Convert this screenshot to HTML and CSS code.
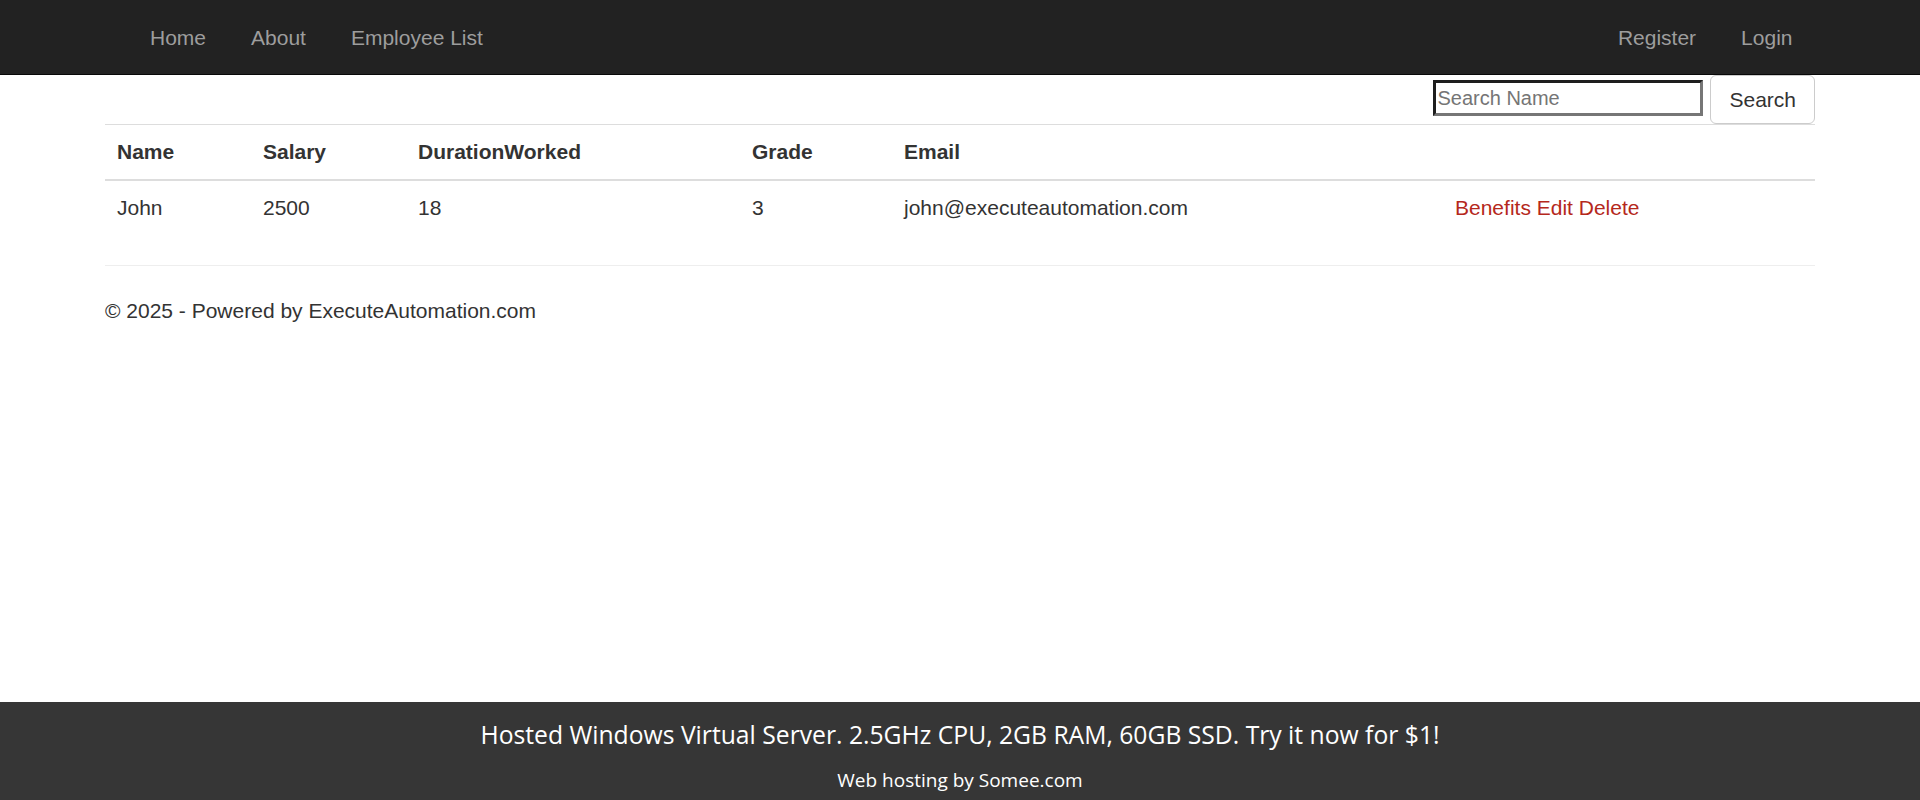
FILE: index.html
```html
<!DOCTYPE html>
<html lang="en">
<head>
<meta charset="utf-8">
<title>Employee List</title>
<link rel="stylesheet" href="styles.css">
</head>
<body>
<div class="page">
  <header class="navbar">
    <div class="nav-container">
      <ul class="nav nav-left">
        <li><a href="#">Home</a></li>
        <li><a href="#">About</a></li>
        <li><a href="#">Employee List</a></li>
      </ul>
      <ul class="nav nav-right">
        <li><a href="#">Register</a></li>
        <li><a href="#">Login</a></li>
      </ul>
    </div>
  </header>

  <main class="container">
    <form class="search-form">
      <input class="search-input" type="text" placeholder="Search Name">
      <button class="btn" type="button">Search</button>
    </form>

    <table class="table">
      <colgroup>
        <col class="c-name"><col class="c-salary"><col class="c-duration"><col class="c-grade"><col class="c-email"><col class="c-actions">
      </colgroup>
      <thead>
        <tr>
          <th>Name</th>
          <th>Salary</th>
          <th>DurationWorked</th>
          <th>Grade</th>
          <th>Email</th>
          <th></th>
        </tr>
      </thead>
      <tbody>
        <tr>
          <td>John</td>
          <td>2500</td>
          <td>18</td>
          <td>3</td>
          <td>john@executeautomation.com</td>
          <td><a class="act" href="#">Benefits</a> <a class="act" href="#">Edit</a> <a class="act" href="#">Delete</a></td>
        </tr>
      </tbody>
    </table>
    <hr class="sep">
    <footer class="site-footer">
      <p>&copy; 2025 - Powered by ExecuteAutomation.com</p>
    </footer>
  </main>

  <div class="host-banner">
    <div class="host-line1">Hosted Windows Virtual Server. 2.5GHz CPU, 2GB RAM, 60GB SSD. Try it now for $1!</div>
    <div class="host-line2">Web hosting by Somee.com</div>
  </div>
</div>
</body>
</html>
```

FILE: styles.css
```css
* { box-sizing: border-box; }

html, body {
  margin: 0;
  padding: 0;
}

body {
  font-family: "Liberation Sans", Arial, Helvetica, sans-serif;
  font-size: 21px;
  line-height: 30px;
  color: #333333;
  background: #ffffff;
}

.page {
  min-height: 100vh;
  display: flex;
  flex-direction: column;
}

/* Navbar */
.navbar {
  background: #222222;
  border-bottom: 1px solid #080808;
  height: 75px;
}

.nav-container {
  width: 1710px;
  margin: 0 auto;
  display: flex;
  justify-content: space-between;
}

.nav {
  list-style: none;
  margin: 0;
  padding: 0;
  display: flex;
}

.nav-left { padding-left: 22.5px; }

.nav a {
  display: block;
  padding: 22.5px 22.5px 22px;
  line-height: 30px;
  color: #9d9d9d;
  text-decoration: none;
}

/* Main */
.container {
  width: 1710px;
  margin: 0 auto;
}

.search-form {
  display: flex;
  justify-content: flex-end;
  align-items: flex-start;
  gap: 7px;
  margin: 0;
}

.search-input {
  width: 270px;
  height: 36px;
  margin-top: 5px;
  padding: 0 1px;
  font-family: "Liberation Sans", Arial, sans-serif;
  font-size: 20px;
  color: #333;
  border-width: 3px;
  border-style: solid;
  border-color: #1e1e1e #767676 #767676 #1e1e1e;
  background: #fff;
  outline: none;
}

.search-input::placeholder { color: #757575; }

.btn {
  height: 49px;
  padding: 8px 18px;
  font-family: "Liberation Sans", Arial, sans-serif;
  font-size: 21px;
  line-height: 30px;
  color: #333;
  background: #fff;
  border: 1px solid #cccccc;
  border-radius: 6px;
}

/* Table */
.table {
  width: 100%;
  border-collapse: collapse;
  table-layout: fixed;
  margin-top: 0;
}

.c-name { width: 146px; }
.c-salary { width: 155px; }
.c-duration { width: 334px; }
.c-grade { width: 152px; }
.c-email { width: 551px; }
.c-actions { width: 372px; }

.table th,
.table td {
  padding: 12px;
  line-height: 30px;
  text-align: left;
  vertical-align: top;
}

.table thead th {
  font-weight: bold;
  border-top: 1px solid #dddddd;
  border-bottom: 2px solid #dddddd;
}

.act {
  color: #b5281c;
  text-decoration: none;
}

.sep {
  margin: 30px 0;
  border: 0;
  border-top: 1px solid #eeeeee;
  height: 0;
}

.site-footer p {
  margin: 0;
}

/* Hosting banner */
.host-banner {
  margin-top: auto;
  height: 98px;
  background: #363636;
  color: #ffffff;
  text-align: center;
  font-family: "Open Sans", "Noto Sans", sans-serif;
  padding-top: 18px;
}

.host-line1 {
  font-size: 24.7px;
  line-height: 30px;
}

.host-line2 {
  margin-top: 17px;
  font-size: 19px;
  line-height: 26px;
}
```
